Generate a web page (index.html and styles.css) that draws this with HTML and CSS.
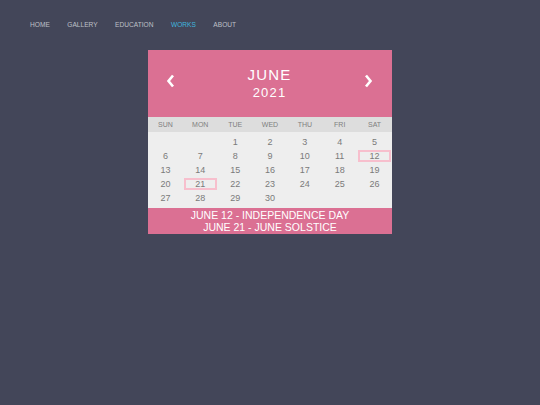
FILE: index.html
```html
<!DOCTYPE html>
<html>
<head>
<meta charset="utf-8">
<link rel="stylesheet" href="styles.css">
</head>
<body>
<nav class="nav">
  <a class="nav-link">HOME</a>
  <a class="nav-link">GALLERY</a>
  <a class="nav-link">EDUCATION</a>
  <a class="nav-link active">WORKS</a>
  <a class="nav-link">ABOUT</a>
</nav>
<div class="calendar">
  <div class="month">
    <span class="arrow"><svg width="10" height="14" viewBox="0 0 10 14"><polyline points="7,1.5 2.5,7 7,12.5" fill="none" stroke="#fff" stroke-width="2.6" stroke-linejoin="miter"/></svg></span>
    <div class="month-title">
      <div class="month-name">JUNE</div>
      <div class="month-year">2021</div>
    </div>
    <span class="arrow"><svg width="10" height="14" viewBox="0 0 10 14"><polyline points="3,1.5 7.5,7 3,12.5" fill="none" stroke="#fff" stroke-width="2.6" stroke-linejoin="miter"/></svg></span>
  </div>
  <div class="weekdays">
    <span>SUN</span><span>MON</span><span>TUE</span><span>WED</span><span>THU</span><span>FRI</span><span>SAT</span>
  </div>
  <div class="days">
    <span></span><span></span><span>1</span><span>2</span><span>3</span><span>4</span><span>5</span>
    <span>6</span><span>7</span><span>8</span><span>9</span><span>10</span><span>11</span><span><b class="mark">12</b></span>
    <span>13</span><span>14</span><span>15</span><span>16</span><span>17</span><span>18</span><span>19</span>
    <span>20</span><span><b class="mark">21</b></span><span>22</span><span>23</span><span>24</span><span>25</span><span>26</span>
    <span>27</span><span>28</span><span>29</span><span>30</span><span></span><span></span><span></span>
  </div>
  <div class="events">
    <div>JUNE 12 - INDEPENDENCE DAY</div>
    <div>JUNE 21 - JUNE SOLSTICE</div>
  </div>
</div>
</body>
</html>
```
FILE: styles.css
```css
html, body {
  margin: 0;
  padding: 0;
  background: #434659;
  font-family: "Liberation Sans", Arial, sans-serif;
}
.nav {
  display: flex;
  gap: 17.5px;
  padding: 21px 0 0 30px;
  height: 30px;
  box-sizing: border-box;
}
.nav-link {
  font-size: 6.6px;
  line-height: 8px;
  color: #bfc0c8;
}
.nav-link.active {
  color: #40b6df;
}
.calendar {
  width: 244px;
  margin: 20px auto 0;
}
.month {
  background: #db7093;
  height: 67px;
  display: flex;
  align-items: center;
  justify-content: space-between;
  padding: 0 19px 0 18px;
  box-sizing: border-box;
  color: #fff;
}
.arrow {
  display: flex;
  margin-top: -5px;
}
.month-title {
  text-align: center;
}
.month-name {
  font-size: 15px;
  letter-spacing: 1.2px;
  line-height: 18px;
}
.month-year {
  font-size: 13px;
  letter-spacing: 1.2px;
  line-height: 18px;
}
.weekdays {
  background: #dddddd;
  display: grid;
  grid-template-columns: repeat(7, 1fr);
  height: 15px;
  align-items: center;
}
.weekdays span {
  text-align: center;
  font-size: 7px;
  color: #808080;
}
.days {
  background: #eeeeee;
  display: grid;
  grid-template-columns: repeat(7, 1fr);
  grid-auto-rows: 14px;
  padding: 3px 0;
}
.days span {
  display: flex;
  align-items: center;
  justify-content: center;
  font-size: 9px;
  color: #7a7a7a;
}
.mark {
  font-weight: normal;
  box-sizing: border-box;
  width: 33px;
  height: 12px;
  border: 2px solid #f7bfcd;
  display: flex;
  align-items: center;
  justify-content: center;
}
.events {
  background: #db7093;
  color: #fff;
  text-align: center;
  font-size: 10.5px;
  line-height: 12px;
  padding: 1px 0 1px;
}
```
